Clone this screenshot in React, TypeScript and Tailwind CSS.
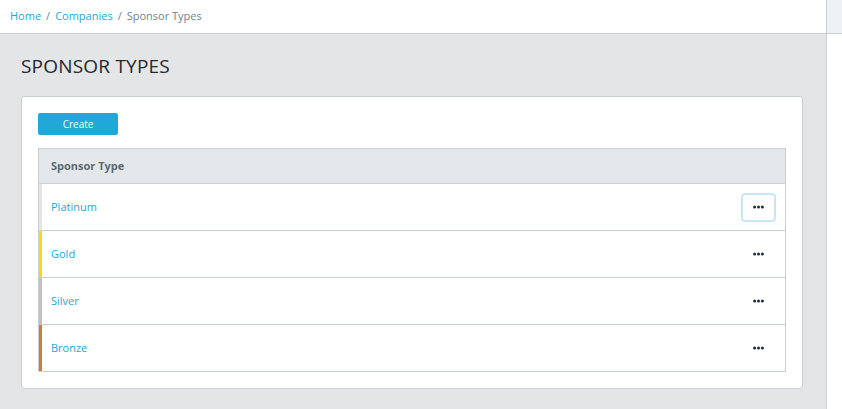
import React from "react";

const rows = [
  { name: "Platinum", color: "border-l-[#e4e5e6]", focused: true },
  { name: "Gold", color: "border-l-[#ffd800]", focused: false },
  { name: "Silver", color: "border-l-[#c0c0c0]", focused: false },
  { name: "Bronze", color: "border-l-[#cd7f32]", focused: false },
];

function Dots() {
  return (
    <svg width="11" height="4" viewBox="0 0 11 4">
      <circle cx="1.6" cy="2" r="1.5" fill="#1b2a3a" />
      <circle cx="5.5" cy="2" r="1.5" fill="#1b2a3a" />
      <circle cx="9.4" cy="2" r="1.5" fill="#1b2a3a" />
    </svg>
  );
}

export default function App() {
  return (
    <div
      className="flex w-[842px] h-[409px] overflow-hidden bg-white"
      style={{ fontFamily: '"Open Sans", "Liberation Sans", sans-serif' }}
    >
      <div className="flex flex-col w-[827px] border-r border-[#c8ced3]">
        {/* breadcrumb */}
        <div className="h-[34px] shrink-0 bg-white border-b border-[#c8ced3] flex items-center px-[10px] text-[11px] text-[#73818f]">
          <a className="text-[#20a8d8]">Home</a>
          <span className="mx-[5px]">/</span>
          <a className="text-[#20a8d8]">Companies</a>
          <span className="mx-[5px]">/</span>
          <span>Sponsor Types</span>
        </div>

        {/* main */}
        <div className="flex-1 bg-[#e4e5e6] px-[21px] pt-[19px]">
          <h1 className="text-[19px] font-medium text-[#23282c] leading-[26px] tracking-[0.2px]">
            SPONSOR TYPES
          </h1>

          <div className="mt-[17px] w-[782px] bg-white border border-[#c8ced3] rounded-[3px] px-[16px] pt-[16px] pb-[16px]">
            <button className="w-[80px] h-[22px] bg-[#20a8d8] text-white text-[10px] rounded-[2px] flex items-center justify-center">
              Create
            </button>

            <div className="mt-[13px] border border-[#c8ced3]">
              <div className="h-[35px] bg-[#e4e7ea] flex items-center px-[12px] text-[11px] font-bold text-[#5c6873] border-b border-[#c8ced3]">
                Sponsor Type
              </div>
              {rows.map((r, i) => {
                const last = i === rows.length - 1;
                return (
                  <div
                    key={r.name}
                    className={`flex items-center justify-between border-l-[3px] ${r.color} pl-[9px] pr-[9px] ${
                      last ? "h-[46px]" : "h-[47px] border-b border-b-[#c8ced3]"
                    }`}
                  >
                    <span className="text-[11px] text-[#20a8d8]">{r.name}</span>
                    <button
                      className={`w-[35px] h-[29px] rounded-[4px] flex items-center justify-center ${
                        r.focused ? "border-[2px] border-[#c6e8f5]" : "border-[2px] border-transparent"
                      }`}
                    >
                      <Dots />
                    </button>
                  </div>
                );
              })}
            </div>
          </div>
        </div>
      </div>
      <div className="flex-1 flex flex-col">
        <div className="h-[34px] bg-[#eef1f5] border-b border-[#c8ced3]" />
        <div className="flex-1 bg-white" />
      </div>
    </div>
  );
}
